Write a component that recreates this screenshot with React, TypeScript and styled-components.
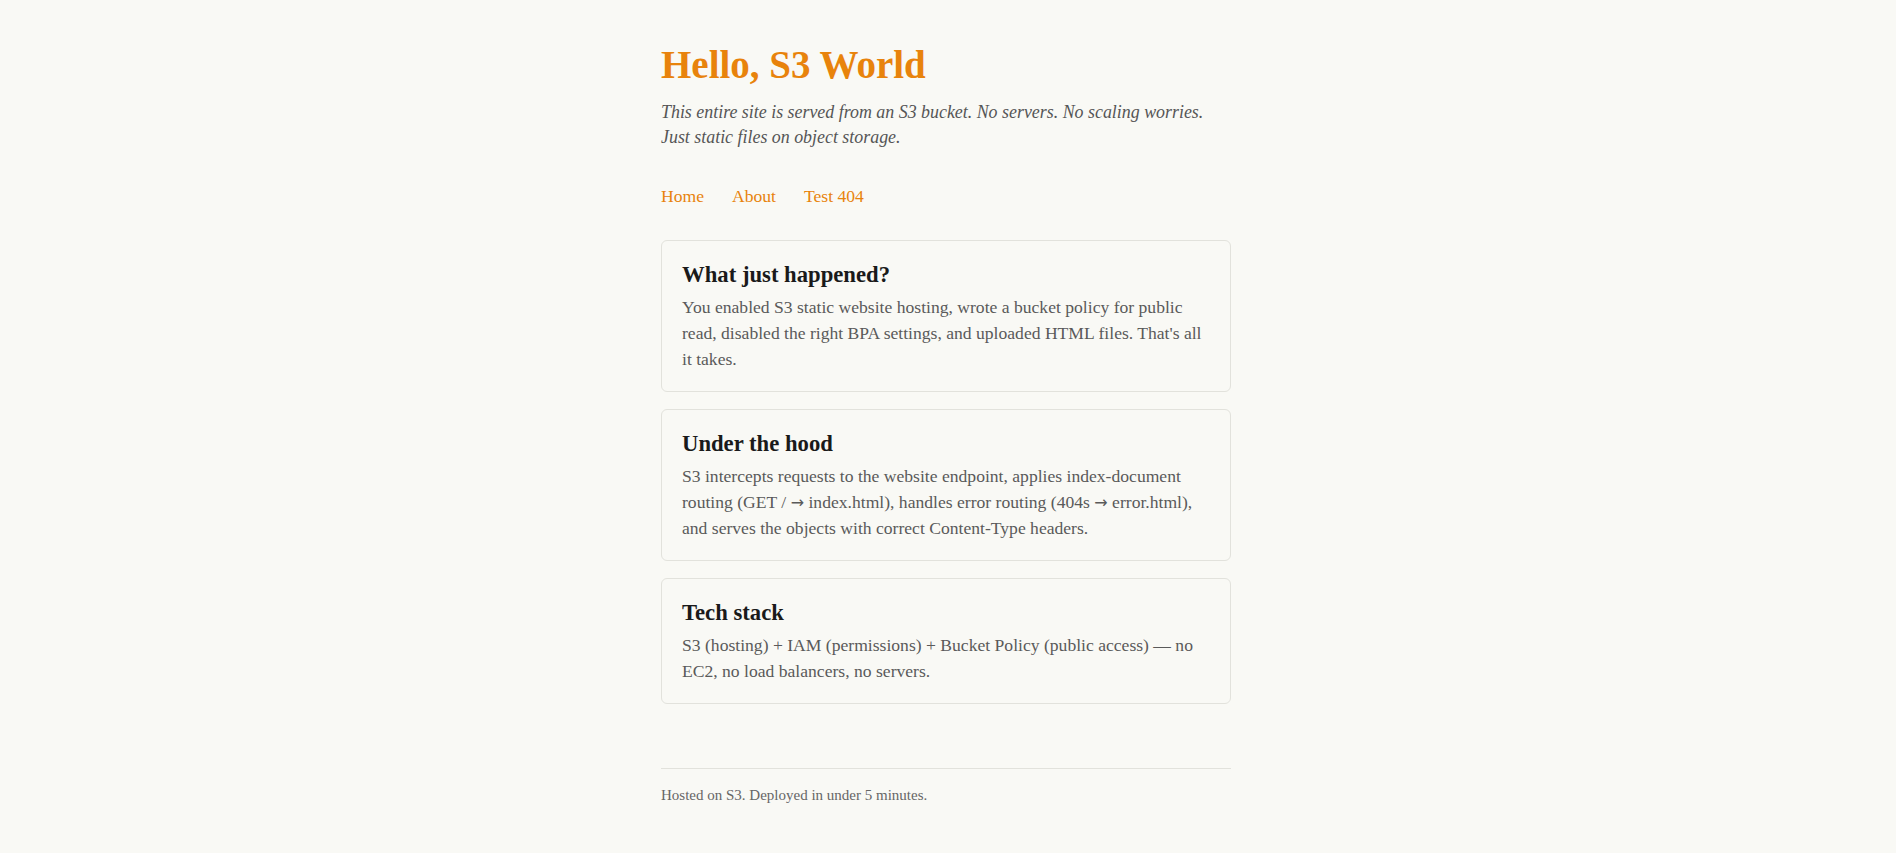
import React from "react";
import styled, { createGlobalStyle } from "styled-components";

const GlobalStyle = createGlobalStyle`
  html, body {
    margin: 0;
    padding: 0;
    background: #f9f9f5;
  }
  body {
    font-family: "Liberation Serif", Georgia, "DejaVu Serif", serif;
    color: #333;
    -webkit-font-smoothing: antialiased;
  }
`;

const Page = styled.div`
  display: flex;
  justify-content: center;
  padding: 44px 4px 40px 0;
`;

const Column = styled.main`
  width: 570px;
  display: flex;
  flex-direction: column;
`;

const Title = styled.h1`
  margin: 0;
  font-size: 39px;
  line-height: 42px;
  font-weight: 700;
  color: #e8830c;
`;

const Lead = styled.p`
  margin: 14px 0 0;
  font-size: 17.9px;
  line-height: 25px;
  font-style: italic;
  color: #555;
`;

const Nav = styled.nav`
  display: flex;
  gap: 28px;
  margin-top: 34px;
  font-size: 17.6px;
  line-height: 24px;
`;

const NavLink = styled.a`
  color: #e8830c;
  text-decoration: none;
`;

const Cards = styled.section`
  display: flex;
  flex-direction: column;
  gap: 17px;
  margin-top: 32px;
`;

const Card = styled.article`
  border: 1px solid #e2e2dc;
  border-radius: 6px;
  padding: 20px 20px 19px;
`;

const CardTitle = styled.h2`
  margin: 0;
  font-size: 22.7px;
  line-height: 28px;
  font-weight: 700;
  color: #1a1a1a;
`;

const CardText = styled.p`
  margin: 5px 0 0;
  font-size: 17.6px;
  line-height: 26px;
  color: #5a5a5a;
`;

/* arrows come from a sans face so they read as long, centred strokes */
const Arrow = styled.span`
  font-family: "DejaVu Sans", sans-serif;
  font-size: 16px;
  line-height: 1;
`;

const Footer = styled.footer`
  margin-top: 64px;
  border-top: 1px solid #e2e2dc;
  padding-top: 16px;
  font-size: 15px;
  line-height: 20px;
  color: #666;
`;

const arrow = <Arrow>{"\u2192"}</Arrow>;

const cards: { title: string; body: React.ReactNode }[] = [
  {
    title: "What just happened?",
    body:
      "You enabled S3 static website hosting, wrote a bucket policy for public read, disabled the right BPA settings, and uploaded HTML files. That's all it takes.",
  },
  {
    title: "Under the hood",
    body: (
      <>
        S3 intercepts requests to the website endpoint, applies index-document routing (GET /{" "}
        {arrow} index.html), handles error routing (404s {arrow} error.html), and serves the
        objects with correct Content-Type headers.
      </>
    ),
  },
  {
    title: "Tech stack",
    body:
      "S3 (hosting) + IAM (permissions) + Bucket Policy (public access) \u2014 no EC2, no load balancers, no servers.",
  },
];

export default function App() {
  return (
    <>
      <GlobalStyle />
      <Page>
        <Column>
          <Title>Hello, S3 World</Title>
          <Lead>
            This entire site is served from an S3 bucket. No servers. No scaling worries. Just
            static files on object storage.
          </Lead>
          <Nav>
            <NavLink href="#">Home</NavLink>
            <NavLink href="#">About</NavLink>
            <NavLink href="#">Test 404</NavLink>
          </Nav>
          <Cards>
            {cards.map((c) => (
              <Card key={c.title}>
                <CardTitle>{c.title}</CardTitle>
                <CardText>{c.body}</CardText>
              </Card>
            ))}
          </Cards>
          <Footer>Hosted on S3. Deployed in under 5 minutes.</Footer>
        </Column>
      </Page>
    </>
  );
}
